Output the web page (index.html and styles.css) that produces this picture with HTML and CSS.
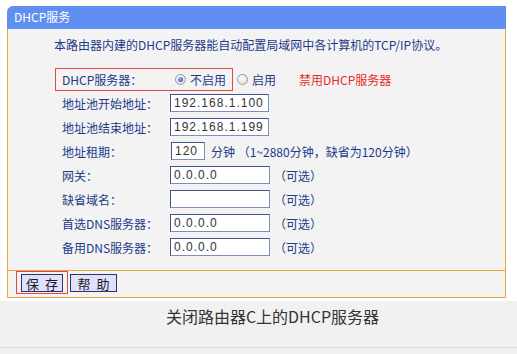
FILE: index.html
```html
<!DOCTYPE html>
<html lang="zh-CN">
<head>
<meta charset="utf-8">
<title>DHCP服务</title>
<link rel="stylesheet" href="styles.css">
</head>
<body>
<div class="frame">
  <div class="panel">
    <div class="head">DHCP服务</div>
    <div class="body">
      <p class="intro">本路由器内建的DHCP服务器能自动配置局域网中各计算机的TCP/IP协议。</p>
      <div class="rows">
        <div class="row row-switch">
          <div class="hl">
            <span class="label">DHCP服务器：</span>
            <span class="radio checked"></span><span class="rtext">不启用</span>
          </div>
          <span class="radio r2"></span><span class="rtext">启用</span>
          <span class="note">禁用DHCP服务器</span>
        </div>
        <div class="row"><span class="label">地址池开始地址：</span><span class="input">192.168.1.100</span></div>
        <div class="row"><span class="label">地址池结束地址：</span><span class="input">192.168.1.199</span></div>
        <div class="row"><span class="label">地址租期：</span><span class="input short">120</span><span class="after">分钟 （1~2880分钟，缺省为120分钟）</span></div>
        <div class="row"><span class="label">网关：</span><span class="input wide">0.0.0.0</span><span class="opt">（可选）</span></div>
        <div class="row"><span class="label">缺省域名：</span><span class="input wide"></span><span class="opt">（可选）</span></div>
        <div class="row"><span class="label">首选DNS服务器：</span><span class="input wide">0.0.0.0</span><span class="opt">（可选）</span></div>
        <div class="row"><span class="label">备用DNS服务器：</span><span class="input wide">0.0.0.0</span><span class="opt">（可选）</span></div>
      </div>
    </div>
    <div class="foot">
      <div class="hl-btn"><span class="btn">保 存</span></div>
      <span class="btn help">帮 助</span>
    </div>
  </div>
</div>
<div class="caption">关闭路由器C上的DHCP服务器</div>
</body>
</html>
```
FILE: styles.css
```css
html, body {
  margin: 0;
  padding: 0;
}
body {
  width: 517px;
  height: 354px;
  background: #f1f1f1;
  font-family: "Noto Sans CJK SC", "Liberation Sans", sans-serif;
  overflow: hidden;
}
.frame {
  background: #ffffff;
  padding: 6px 11px 3px 7px;
}
.panel {
  width: 499px;
}
.head {
  height: 23px;
  line-height: 22px;
  background: #5f8ff0;
  color: #ffffff;
  font-size: 12px;
  padding-left: 7px;
  border-top-left-radius: 6px;
}
.body {
  background: #f3f3f3;
  border-left: 1px solid #eaa640;
  border-right: 1px solid #eaa640;
  padding: 8px 0 11px 0;
}
.intro {
  margin: 0 0 15px 46px;
  font-size: 12px;
  line-height: 16px;
  color: #1d3a8a;
}
.rows {
  display: flex;
  flex-direction: column;
  padding-left: 47px;
  color: #1d3a8a;
  font-size: 12px;
}
.row {
  display: flex;
  align-items: center;
  height: 24px;
  padding-left: 7px;
}
.row-switch {
  height: 23px;
  padding-left: 0;
}
.hl {
  display: flex;
  align-items: center;
  height: 21px;
  border: 1px solid #e0484a;
  padding: 0 6px 0 6px;
}
.label {
  width: 108px;
  flex: none;
}
.radio {
  width: 11px;
  height: 11px;
  border-radius: 50%;
  border: 1px solid #9a9a9a;
  background: radial-gradient(circle at 40% 35%, #ffffff 0%, #e2e2e2 70%, #c9c9c9 100%);
  box-sizing: border-box;
  margin-left: 5px;
  margin-right: 4px;
  position: relative;
  flex: none;
}
.radio.checked::after {
  content: "";
  position: absolute;
  left: 2px;
  top: 2px;
  width: 5px;
  height: 5px;
  border-radius: 50%;
  background: radial-gradient(circle at 40% 35%, #8fb4ff 0%, #2b5bc4 80%);
}
.radio.r2 {
  margin-left: 4px;
}
.rtext {
  color: #1d3a8a;
}
.note {
  color: #e8282b;
  margin-left: 23px;
}
.input {
  display: flex;
  align-items: center;
  box-sizing: border-box;
  width: 99px;
  height: 18px;
  background: #ffffff;
  border: 1px solid #7b8fb8;
  border-top-color: #3f5688;
  border-left-color: #3f5688;
  padding-left: 3px;
  font-family: "Liberation Sans", sans-serif;
  font-size: 12px;
  letter-spacing: 1px;
  color: #333333;
  flex: none;
}
.input.wide {
  width: 100px;
}
.input.short {
  width: 34px;
  margin-left: 1px;
}
.after {
  margin-left: 6px;
}
.opt {
  margin-left: 4px;
}
.foot {
  display: flex;
  align-items: flex-start;
  background: #f3f3f3;
  border: 1px solid #eaa640;
  height: 26px;
  padding-left: 8px;
}
.hl-btn {
  border: 1px solid #e0484a;
  padding: 2px 4px 1px 4px;
}
.btn {
  display: flex;
  align-items: center;
  justify-content: center;
  box-sizing: border-box;
  width: 42px;
  height: 18px;
  background: #dfe1fa;
  border: 1px solid #2e3566;
  font-size: 13px;
  word-spacing: 3px;
  color: #1a1a2a;
}
.btn.help {
  width: 47px;
  margin-left: 2px;
  margin-top: 3px;
}
.caption {
  height: 47px;
  padding-top: 5px;
  padding-left: 28px;
  box-sizing: border-box;
  border-bottom: 1px solid #dcdcdc;
  text-align: center;
  font-size: 16px;
  line-height: 20px;
  color: #333333;
}
```
